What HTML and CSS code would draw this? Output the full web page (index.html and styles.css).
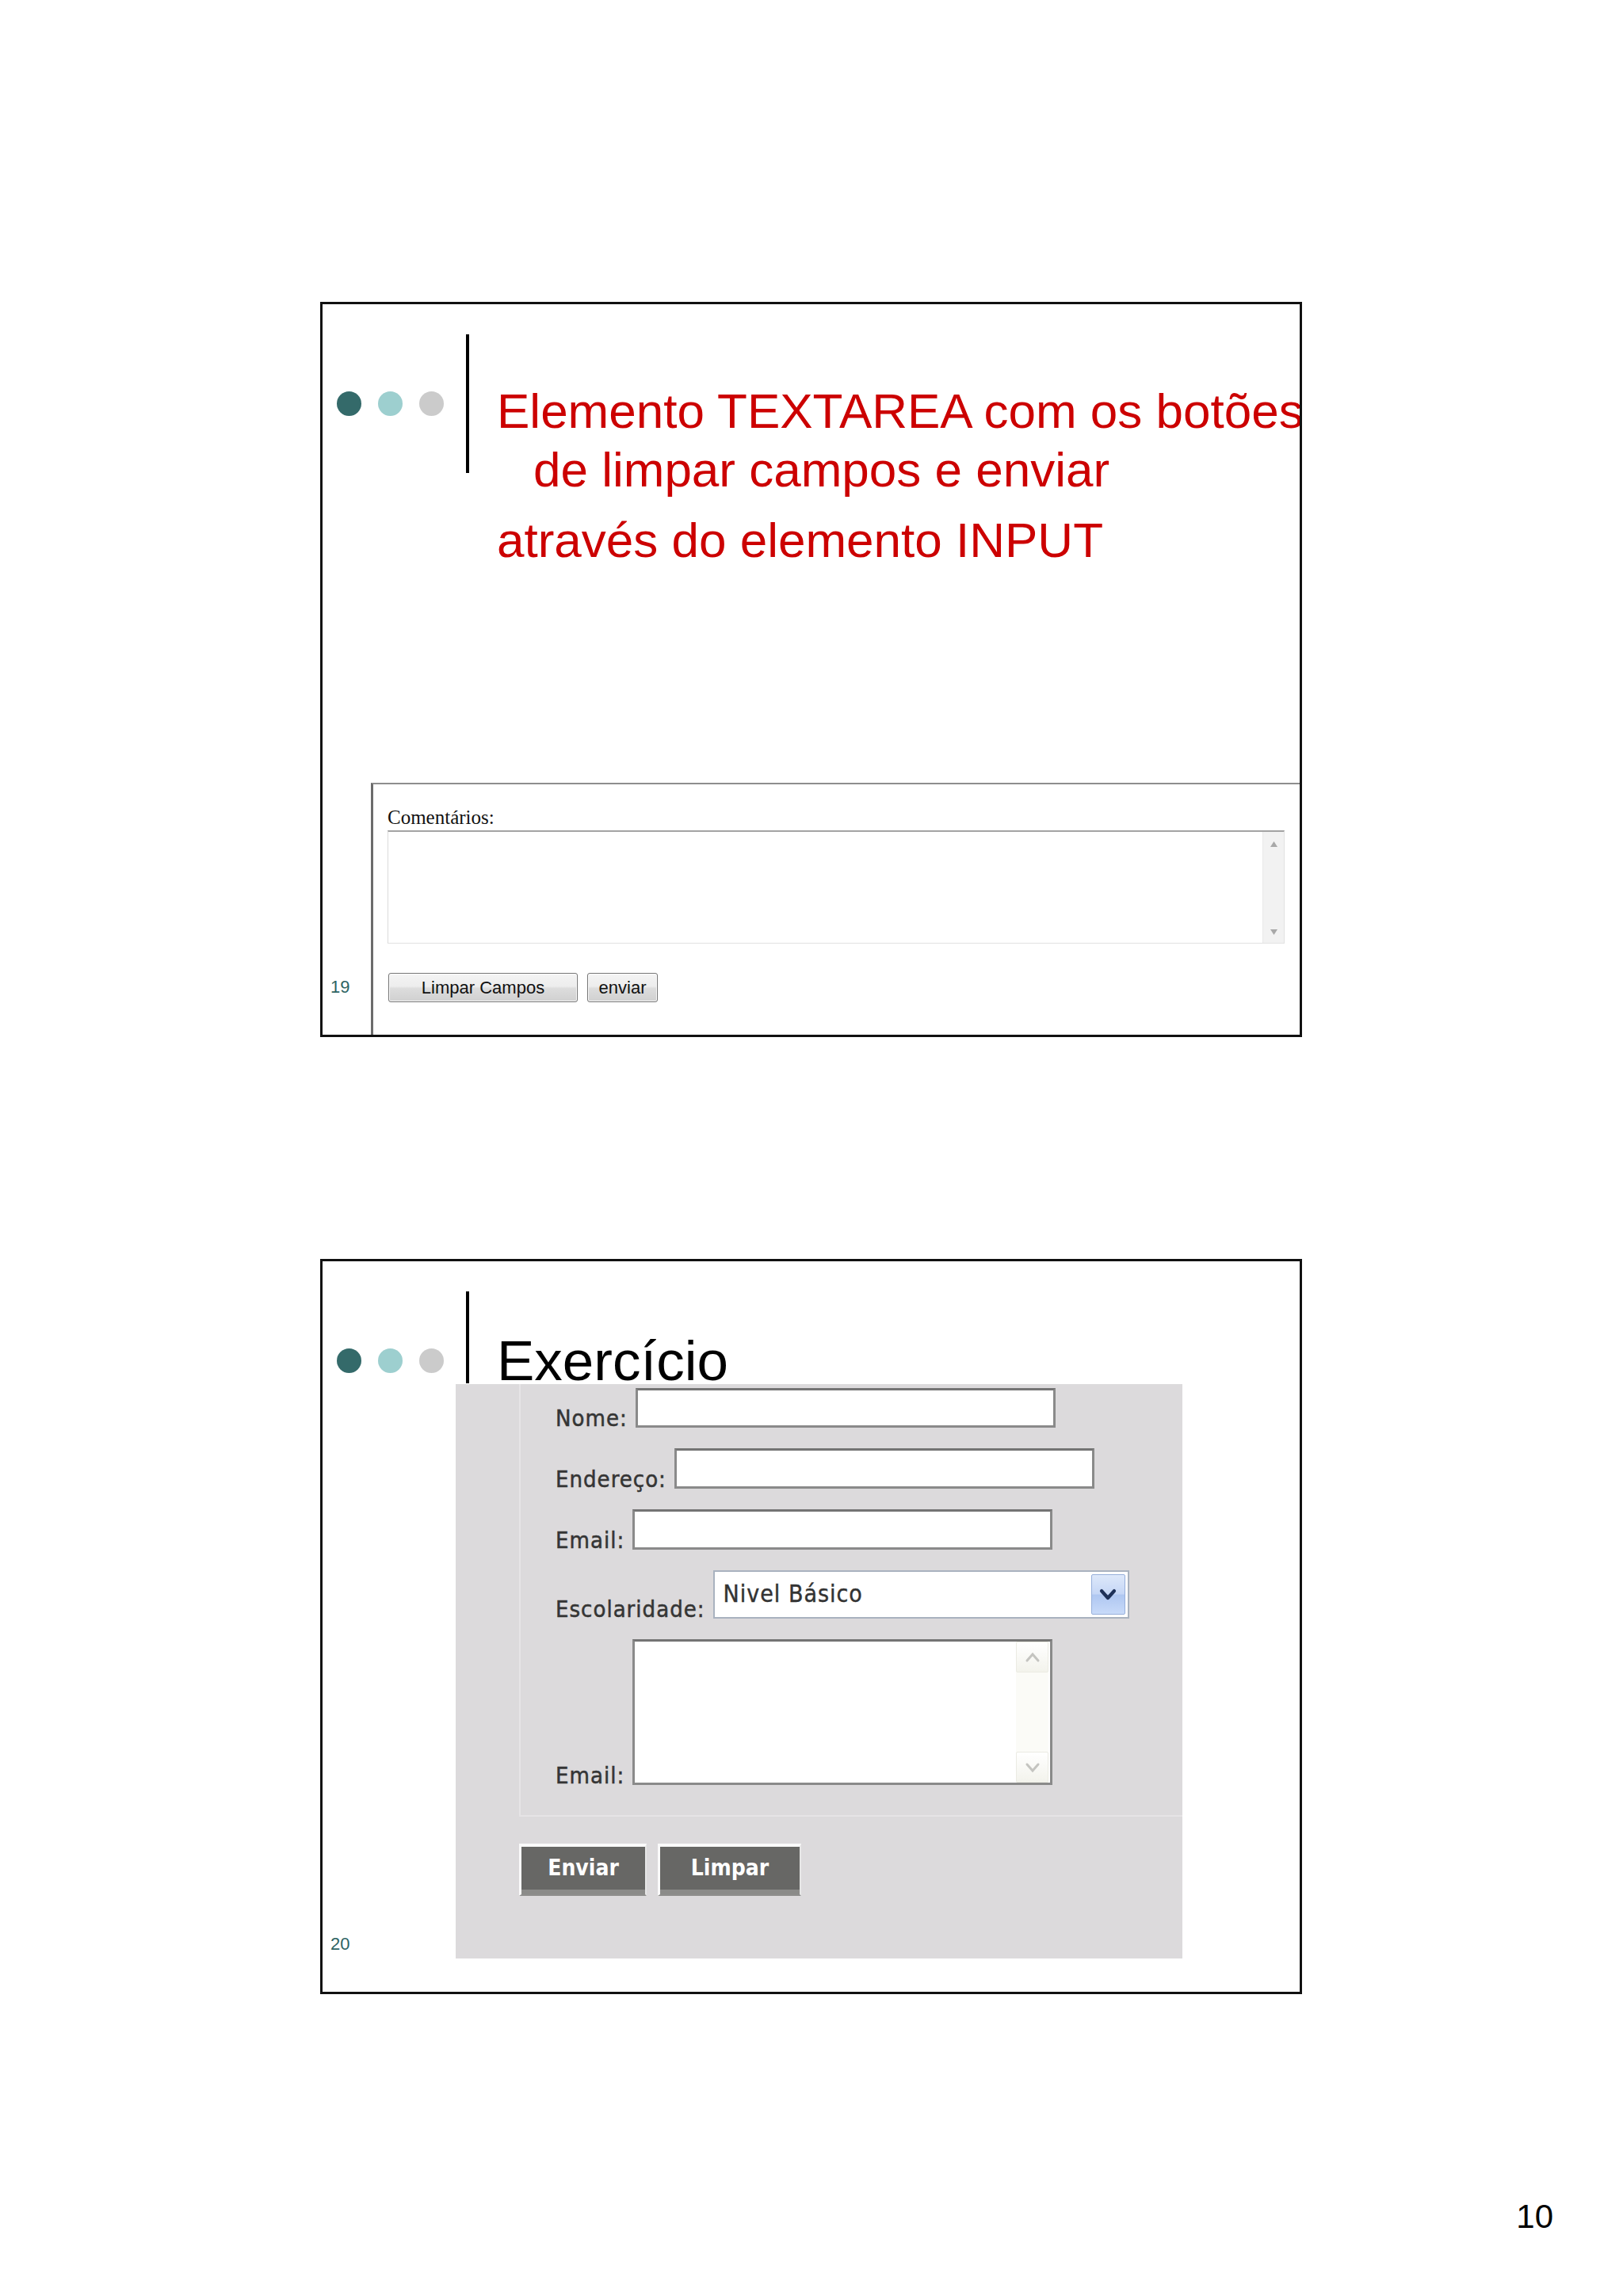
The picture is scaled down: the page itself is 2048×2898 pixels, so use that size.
FILE: index.html
```html
<!DOCTYPE html>
<html lang="pt">
<head>
<meta charset="utf-8">
<title>Slides 19 e 20</title>
<link rel="stylesheet" href="styles.css">
</head>
<body>
<div class="page">
  <section class="slide">
    <div class="slide-head">
      <div class="dots"><span class="dot dot-1"></span><span class="dot dot-2"></span><span class="dot dot-3"></span></div>
      <div class="vline"></div>
      <div class="title title-red">
        <p class="para hang">Elemento TEXTAREA com os botões<br>de limpar campos e enviar</p>
        <p class="para para-2">através do elemento INPUT</p>
      </div>
    </div>
    <div class="shot1">
      <div class="lbl-serif">Comentários:</div>
      <div class="ta1">
        <div class="ta1-scroll">
          <svg class="tri" width="9" height="7" viewBox="0 0 9 7"><path d="M4.5 0 L9 7 L0 7 Z" fill="#a8a8a8"/></svg>
          <svg class="tri" width="9" height="7" viewBox="0 0 9 7"><path d="M0 0 L9 0 L4.5 7 Z" fill="#a8a8a8"/></svg>
        </div>
      </div>
      <div class="btns1">
        <button class="btn1 btn1-wide" type="reset">Limpar Campos</button>
        <button class="btn1" type="submit">enviar</button>
      </div>
    </div>
    <div class="slide-num">19</div>
  </section>

  <section class="slide">
    <div class="slide-head slide-head--short">
      <div class="dots"><span class="dot dot-1"></span><span class="dot dot-2"></span><span class="dot dot-3"></span></div>
      <div class="vline vline--short"></div>
      <div class="title title-black">
        <p class="para">Exercício</p>
      </div>
    </div>
    <div class="shot2">
      <div class="fset">
        <div class="frow">
          <span class="flabel">Nome:</span>
          <div class="inp inp-1"></div>
        </div>
        <div class="frow">
          <span class="flabel">Endereço:</span>
          <div class="inp"></div>
        </div>
        <div class="frow">
          <span class="flabel">Email:</span>
          <div class="inp"></div>
        </div>
        <div class="frow">
          <span class="flabel">Escolaridade:</span>
          <div class="sel">
            <span class="sel-text">Nivel Básico</span>
            <span class="sel-btn">
              <svg width="26" height="18" viewBox="0 0 26 18"><path d="M5 4 L13 13 L21 4" fill="none" stroke="#1e3158" stroke-width="4.2" stroke-linecap="round" stroke-linejoin="round"/></svg>
            </span>
          </div>
        </div>
        <div class="frow">
          <span class="flabel">Email:</span>
          <div class="ta2">
            <div class="ta2-scroll">
              <span class="ta2-arrow"><svg width="22" height="14" viewBox="0 0 22 14"><path d="M4 11 L11 3 L18 11" fill="none" stroke="#c4c4c0" stroke-width="3" stroke-linecap="round"/></svg></span>
              <span class="ta2-arrow"><svg width="22" height="14" viewBox="0 0 22 14"><path d="M4 3 L11 11 L18 3" fill="none" stroke="#c4c4c0" stroke-width="3" stroke-linecap="round"/></svg></span>
            </div>
          </div>
        </div>
      </div>
      <div class="btns2">
        <button class="btn2" type="submit">Enviar</button>
        <button class="btn2 btn2-wide" type="reset">Limpar</button>
      </div>
    </div>
    <div class="slide-num">20</div>
  </section>

  <div class="pgnum">10</div>
</div>
</body>
</html>
```

FILE: styles.css
```css
html, body {
  margin: 0;
  padding: 0;
  background: #ffffff;
}

body {
  font-family: "Liberation Sans", Arial, sans-serif;
}

.page {
  width: 2048px;
  height: 2898px;
  box-sizing: border-box;
  padding-top: 381px;
  overflow: hidden;
}

.slide {
  position: relative;
  width: 1233px;
  height: 922px;
  margin-left: 404px;
  border: 3px solid #111111;
  overflow: hidden;
  background: #ffffff;
}

.slide + .slide {
  margin-top: 280px;
}

.slide-head {
  display: flex;
  align-items: flex-start;
  box-sizing: border-box;
  height: 604px;
  padding-top: 38px;
}

.slide-head--short {
  height: 155px;
}

.dots {
  display: flex;
  gap: 21px;
  margin-left: 18px;
  margin-top: 72px;
  flex: none;
}

.dot {
  width: 31px;
  height: 31px;
  border-radius: 50%;
}

.dot-1 { background: #346a6a; }
.dot-2 { background: #9dcfcf; }
.dot-3 { background: #cbcbcb; }

.vline {
  width: 4px;
  height: 175px;
  background: #000000;
  margin-left: 28px;
  flex: none;
}

.vline--short {
  height: 116px;
}

.title {
  margin-left: 35px;
  white-space: nowrap;
  flex: none;
}

.title-red {
  color: #cc0000;
  font-size: 62px;
  line-height: 74px;
  margin-top: 60px;
}

.title-black {
  color: #000000;
  font-size: 71px;
  line-height: 80px;
  margin-top: 48px;
}

.para {
  margin: 0;
}

.hang {
  padding-left: 46px;
  text-indent: -46px;
}

.para-2 {
  margin-top: 15px;
}

/* ---------- slide 19 screenshot ---------- */

.shot1 {
  width: 1200px;
  height: 330px;
  margin-left: 61px;
  box-sizing: border-box;
  border-top: 2px solid #8e8e8e;
  border-left: 3px solid #6c6c6c;
  padding: 28px 0 0 18px;
  background: #ffffff;
}

.lbl-serif {
  font-family: "Liberation Serif", "Times New Roman", serif;
  font-size: 25px;
  line-height: 28px;
  color: #111111;
}

.ta1 {
  width: 1132px;
  height: 143px;
  margin-top: 2px;
  box-sizing: border-box;
  border-top: 2px solid #a3a3a3;
  border-left: 1px solid #dadada;
  border-right: 1px solid #e2e2e2;
  border-bottom: 1px solid #e2e2e2;
  background: #ffffff;
  display: flex;
  justify-content: flex-end;
}

.ta1-scroll {
  width: 27px;
  box-sizing: border-box;
  padding: 12px 0 10px;
  background: #f2f2f2;
  border-left: 1px solid #e9e9e9;
  display: flex;
  flex-direction: column;
  justify-content: space-between;
  align-items: center;
}

.tri {
  display: block;
}

.btns1 {
  display: flex;
  gap: 12px;
  margin-top: 37px;
  margin-left: 1px;
}

.btn1 {
  height: 37px;
  width: 89px;
  padding: 0;
  margin: 0;
  border: 1px solid #767676;
  border-radius: 3px;
  background: linear-gradient(#f4f4f4 0%, #ededed 46%, #dddddd 52%, #d0d0d0 100%);
  box-shadow: inset 0 0 0 1px #fbfbfb;
  font-family: "Liberation Sans", Arial, sans-serif;
  font-size: 22px;
  line-height: 35px;
  color: #111111;
}

.btn1-wide {
  width: 239px;
}

.slide-num {
  position: absolute;
  left: 10px;
  top: 850px;
  font-size: 22px;
  line-height: 24px;
  color: #2e6464;
}

/* ---------- slide 20 screenshot ---------- */

.shot2 {
  width: 917px;
  height: 725px;
  margin-left: 168px;
  background: #dcdadc;
}

.fset {
  height: 546px;
  margin-left: 80px;
  box-sizing: border-box;
  border-left: 2px solid #e6e4e6;
  border-bottom: 2px solid #e6e4e6;
  padding: 5px 0 0 44px;
  display: flex;
  flex-direction: column;
  gap: 26px;
}

.frow {
  display: flex;
  align-items: flex-end;
}

.flabel {
  font-family: "DejaVu Sans Condensed", "DejaVu Sans", sans-serif;
  font-stretch: condensed;
  font-size: 29px;
  line-height: 29px;
  letter-spacing: 1px;
  color: #353535;
  -webkit-text-stroke: 0.5px #353535;
  margin: 0 10px -3px 0;
  white-space: nowrap;
}

.inp {
  box-sizing: border-box;
  width: 530px;
  height: 51px;
  border: 3px solid #8a8a8a;
  border-top-color: #747474;
  background: #ffffff;
}

.inp-1 {
  height: 50px;
}

.sel {
  box-sizing: border-box;
  width: 525px;
  height: 61px;
  border: 2px solid #a9b2bf;
  background: #ffffff;
  display: flex;
  align-items: stretch;
}

.sel-text {
  flex: 1;
  padding: 11px 0 0 11px;
  font-family: "DejaVu Sans Condensed", "DejaVu Sans", sans-serif;
  font-stretch: condensed;
  font-size: 30px;
  line-height: 34px;
  letter-spacing: 1px;
  color: #333333;
  -webkit-text-stroke: 0.4px #333333;
}

.sel-btn {
  width: 41px;
  margin: 3px 3px 3px 0;
  border: 1px solid #97afdb;
  border-radius: 2px;
  background: linear-gradient(#dde8fa 0%, #c6d7f6 48%, #afc7f1 52%, #c8daf9 100%);
  display: flex;
  align-items: center;
  justify-content: center;
}

.ta2 {
  box-sizing: border-box;
  width: 530px;
  height: 184px;
  border: 3px solid #8a8a8a;
  border-top-color: #747474;
  background: #ffffff;
  padding-right: 2px;
  display: flex;
  justify-content: flex-end;
}

.ta2-scroll {
  width: 41px;
  background: #fbfbf7;
  display: flex;
  flex-direction: column;
  justify-content: space-between;
}

.ta2-arrow {
  height: 39px;
  box-sizing: border-box;
  border: 1px solid #ebebe3;
  border-radius: 2px;
  background: linear-gradient(#ffffff, #f3f3ec);
  display: flex;
  align-items: center;
  justify-content: center;
}

.btns2 {
  display: flex;
  gap: 14px;
  margin: 34px 0 0 80px;
}

.btn2 {
  box-sizing: border-box;
  width: 161px;
  height: 66px;
  margin: 0;
  padding: 0 0 7px;
  border-style: solid;
  border-width: 4px 2px 2px 3px;
  border-color: #fafafa #e6e6e6 #8e8e8c #fafafa;
  background: #676765;
  box-shadow: inset 0 -6px 0 #8b8b89;
  color: #ffffff;
  font-family: "DejaVu Sans Condensed", "DejaVu Sans", sans-serif;
  font-stretch: condensed;
  font-weight: bold;
  font-size: 28px;
  line-height: 40px;
}

.btn2-wide {
  width: 181px;
}

.pgnum {
  margin-top: 257px;
  padding-right: 88px;
  text-align: right;
  font-size: 42px;
  line-height: 48px;
  color: #000000;
}
```
